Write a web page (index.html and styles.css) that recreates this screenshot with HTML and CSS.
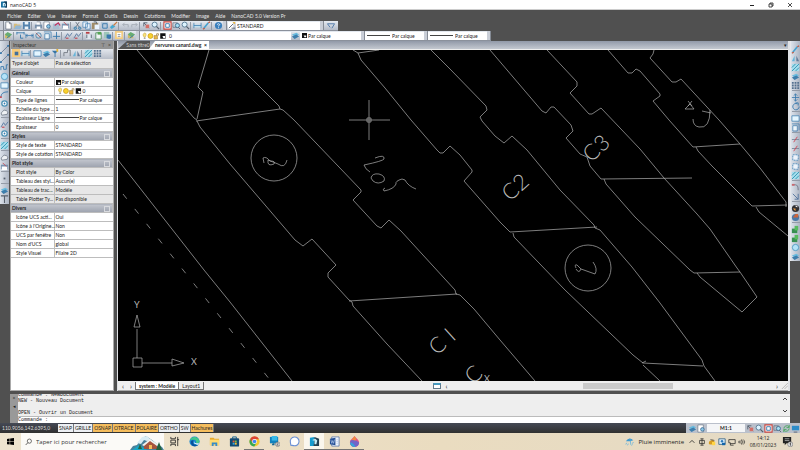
FILE: index.html
```html
<!DOCTYPE html>
<html lang="fr">
<head>
<meta charset="utf-8">
<title>nanoCAD 5</title>
<link rel="stylesheet" href="styles.css">
</head>
<body>
<header class="title">
  <svg class="logo" viewBox="0 0 10 10"><rect width="10" height="10" rx="1" fill="#17709f"/><path d="M5 0h5v10H7z" fill="#113c58"/><path d="M3 8V3l3-1 2 2v4H6V4H5v4z" fill="#d7f3ff"/></svg>
  <span>nanoCAD 5</span>
  <div class="window-buttons">
    <button aria-label="Réduire"><svg viewBox="0 0 6 6"><path d="M1 3.5h4" stroke="#222"/></svg></button>
    <button aria-label="Restaurer"><svg viewBox="0 0 6 6"><path d="M1 2h3v3H1zM2 2V1h3v3H4" fill="none" stroke="#222" stroke-width=".8"/></svg></button>
    <button aria-label="Fermer"><svg viewBox="0 0 6 6"><path d="M1 1l4 4M5 1L1 5" stroke="#222" stroke-width=".8"/></svg></button>
  </div>
</header>
<nav class="menu">
  <a href="#">Fichier</a><a href="#">Editer</a><a href="#">Vue</a><a href="#">Insérer</a><a href="#">Format</a><a href="#">Outils</a><a href="#">Dessin</a><a href="#">Cotations</a><a href="#">Modifier</a><a href="#">Image</a><a href="#">Aide</a><a href="#">NanoCAD 5.0 Version Pr</a>
</nav>
<div class="bars">
  <div class="bar">
    <i class="grip"></i>
    <div class="tools" data-icons="new open save | print preview export plot | cut copy paste clip brush | undo redo | pan zoom | frame zoomwin zoom | ruler pencil | help"></div>
    <i class="grip"></i>
    <div class="tools" data-icons="style"></div>
    <select class="style-select" aria-label="Style de texte"><option>STANDARD</option></select>
    <i class="grip"></i>
    <button class="wide" aria-label="Style de cotation"><svg viewBox="0 0 14 9"><path d="M3 2h8L8 7M3 2l3 4" fill="none" stroke="#4773a5"/></svg></button>
  </div>
  <div class="bar">
    <i class="grip"></i>
    <div class="tools" data-icons="layers | dimh dim diam dimbox axis | edit edit | redbox greenbox shield | props | layers"></div>
    <i class="grip"></i>
    <label class="combo layer"><svg viewBox="0 0 30 9"><use href="#layer-state"/></svg><select aria-label="Calque courant"><option>0</option></select></label>
    <div class="tools" data-icons="stack"></div>
    <label class="combo color"><svg viewBox="0 0 6 6"><use href="#swatch"/></svg><select aria-label="Couleur"><option>Par calque</option></select></label>
    <i class="grip"></i>
    <label class="combo line"><i class="sample"></i><select aria-label="Type de ligne"><option>Par calque</option></select></label>
    <i class="grip"></i>
    <label class="combo line"><i class="sample"></i><select aria-label="Épaisseur"><option>Par calque</option></select></label>
    <i class="grip"></i>
  </div>
</div>
<main>
  <div class="rail"><div class="tools" data-icons="line line spline circle rect arc donut cloud | edit donut | hatch | cloud plot | point | stack text"></div></div>
  <aside class="inspector">
    <div class="panel-title"><span>Inspecteur</span><button aria-label="Épingler">⊤</button><button aria-label="Fermer">×</button></div>
    <div class="panel-tools"><div class="tools" data-icons="selected ruler | rect stack filter | pin mirror | hatch grid"></div></div>
    <table>
      <tbody>
        <tr class="off"><th class="flush">Type d'objet</th><td>Pas de sélection</td></tr>
        <tr class="group"><th colspan="2"><span>Général</span></th></tr>
        <tr><th>Couleur</th><td><svg class="sw" viewBox="0 0 6 6"><use href="#swatch"/></svg>Par calque</td></tr>
        <tr><th>Calque</th><td><svg class="state" viewBox="0 0 30 9"><use href="#layer-state"/></svg>0</td></tr>
        <tr><th>Type de lignes</th><td><i class="sample"></i>Par calque</td></tr>
        <tr><th>Echelle du type ...</th><td>1</td></tr>
        <tr><th>Epaisseur Ligne</th><td><i class="sample"></i>Par calque</td></tr>
        <tr><th>Epaisseur</th><td>0</td></tr>
        <tr class="group"><th colspan="2"><span>Styles</span></th></tr>
        <tr><th>Style de texte</th><td>STANDARD</td></tr>
        <tr><th>Style de cotation</th><td>STANDARD</td></tr>
        <tr class="group"><th colspan="2"><span>Plot style</span></th></tr>
        <tr class="off"><th>Plot style</th><td>By Color</td></tr>
        <tr><th>Tableau des styl...</th><td>Aucun(e)</td></tr>
        <tr class="off"><th>Tableau de trac...</th><td>Modèle</td></tr>
        <tr class="off"><th>Table Plotter Ty...</th><td>Pas disponible</td></tr>
        <tr class="group"><th colspan="2"><span>Divers</span></th></tr>
        <tr><th>Icône UCS acti...</th><td>Oui</td></tr>
        <tr><th>Icône à l'Origine...</th><td>Non</td></tr>
        <tr><th>UCS par fenêtre</th><td>Non</td></tr>
        <tr><th>Nom d'UCS</th><td>global</td></tr>
        <tr><th>Style Visuel</th><td>Filaire 2D</td></tr>
      </tbody>
    </table>
  </aside>
  <section class="document">
    <div class="doc-tabs"><button class="back">Sans titre0</button><button class="front">nervures canard.dwg <b>×</b></button><span class="drop">▾</span></div>
    <svg class="canvas" viewBox="118 50 670 331" preserveAspectRatio="xMidYMid slice">
      <g class="ink">
        <path d="M137 50L194 118L197 120M209 50L198 87L203 92L197 119M196 121L280 109M225 52L221 48M225 52L279 106L280 109L283 110L294 120L361 190L361 192L353 200L377 226L381 228L389 220L401 231L455 290L456 294L460 295L474 309L500 340L535 381"/>
        <path d="M197 121L200 127L230 164L295 240L303 246L312 239L336 265L328 273L328 277L349 300L352 302L353 306L387 344L422 381M349 301L457 294"/>
        <path d="M118 160L204 270L230 302L292 381"/>
        <path d="M123 194L270 380" stroke-dasharray="6 13"/>
        <path d="M353 50L358 53L379 50M358 53L361 60L385 88L411 120L437 150L440 153L443 153L450 146L460 155L472 170L472 172L464 181L500 222L510 232L597 227M513 233L514 237L565 290L633 355L643 363L703 366M642 363L646 361M643 365L660 381"/>
        <path d="M431 50L450 69L486 106L487 110L480 117L482 121L495 136L504 143L512 136L527 150L560 190L594 225L595 228L600 230L632 267L660 303L702 360L704 366L715 381"/>
        <path d="M490 50L542 111L546 113L551 107L554 107L571 125L573 131L566 138L580 154L587 157L590 166L601 179L692 178M604 179L606 184L635 217L690 270L694 273L740 272M697 273L700 277L742 312L757 297L740 272L737 268L710 229L697 214L664 178L640 149L601 108L592 114L589 114L570 93L577 86L577 82L547 50"/>
        <path d="M608 50L628 73L632 73L636 69L640 71L660 94L660 96L653 101L669 120L693 147L740 144M696 147L698 151L712 166L752 206L787 205M756 207L759 212L788 236M654 50L653 54L650 58L672 82L676 82L681 79L719 120L740 144L760 168L786 202V207"/>
        <circle cx="274" cy="158" r="23"/><circle cx="588" cy="268" r="23"/>
        <path d="M264 163L263 158Q266 156 270 161Q276 161 274 164Q267 167 268 160L278 164Q285 169 287 160M375 158Q385 154 384 159Q383 161 364 165Q365 169 370 172M371 178Q372 173 379 174Q386 176 384 181Q378 185 373 181ZM385 188Q382 189 384 191Q394 189 396 184Q395 181 402 179L405 180Q408 186 416 189"/>
        <path d="M576 268Q574 264 577 265L581 269Q579 274 576 269M581 269L595 274Q598 269 593 262M688 101L692 106M692 101L688 106M685 109L690 104L694 109ZM702 111L711 113M710 110Q710 129 699 127Q693 126 693 119"/>
        <path d="M137 358V329M134 327L137 315L140 327ZM142 363H172M172 359L184 363L172 366ZM133 358H142V367H133Z"/>
        <path d="M369 100V140M349 120H390M367 118H371V122H367Z"/>
      </g>
      <g class="plot-text">
        <text transform="translate(510 202) rotate(-42)">C2</text>
        <text transform="translate(437 356) rotate(-42)">C</text>
        <text transform="translate(453 342) rotate(-42)">I</text>
        <text transform="translate(591 163) rotate(-42)">C3</text>
        <text transform="translate(473 385) rotate(-42)">C</text>
        <text class="axis" x="134" y="308">Y</text>
        <text class="axis" x="191" y="365">X</text>
        <text class="axis" x="484" y="382">X</text>
      </g>
    </svg>
    <div class="layout-tabs">
      <span class="arrows">‹</span><span class="arrows">›</span><button class="layout current">system : Modèle</button><button class="layout">Layout1</button>
      <div class="scroll">
        <i class="split"></i><span class="arrows">‹</span><div class="track"><i class="thumb"></i></div><span class="arrows">›</span>
        <svg class="corner" viewBox="0 0 8 8"><path d="M1 8L8 1M4 8l4-4" stroke="#999" stroke-width=".7"/></svg>
      </div>
    </div>
  </section>
  <div class="rail right"><div class="tools" data-icons="pencil mirror hatch stack grid | move rotate | rect dimbox | trim trim frame2 frame2 hatch | corner chamfer | ball ball2 | green green circle stack"></div></div>
</main>
<section class="console">
  <div class="console-side"><span>×</span><span>◂</span></div>
  <div class="console-body">
    <div class="log"><pre>Commande : NewDocument
NEW - Nouveau Document

OPEN - Ouvrir un Document</pre><div class="updown"><svg viewBox="0 0 6 6"><path d="M1 4l2-2 2 2" fill="none" stroke="#444"/></svg><svg viewBox="0 0 6 6"><path d="M1 2l2 2 2-2" fill="none" stroke="#444"/></svg></div></div>
    <label class="prompt">Commande :<input type="text" aria-label="Commande"></label>
  </div>
</section>
<div class="status">
  <span class="coords">110.9056,142.6395,0</span>
  <div class="modes"><button>SNAP</button><button>GRILLE</button><button class="on">OSNAP</button><button class="on">OTRACE</button><button class="on">POLAIRE</button><button>ORTHO</button><button>SW</button><button class="on">Hachures</button></div>
  <div class="view-tools"><div class="tools" data-icons="stack preview"></div><button class="scale">M1:1</button><div class="tools" data-icons="pan zoom frame zoomwin refresh screen"></div></div>
</div>
<footer class="taskbar">
  <button class="start" aria-label="Démarrer"><svg viewBox="0 0 8 8"><path d="M0 1l3-.4v3.1H0zM3.6.5L8 0v3.7H3.6zM0 4.3h3v3.1L0 7zM3.6 4.3H8V8l-4.4-.5z"/></svg></button>
  <label class="search">
    <svg class="lens" viewBox="0 0 8 8"><circle cx="5" cy="3" r="2.4" fill="none" stroke="#222" stroke-width=".7"/><path d="M3.3 4.8L.8 7.4" stroke="#222" stroke-width=".8"/></svg>
    <input type="text" placeholder="Taper ici pour rechercher">
    <svg class="scene" viewBox="0 0 34 15"><path d="M0 15l3-4 4-1 4-6 5-3 6 4 5 4 5 3 2 3z" fill="#48819b"/><path d="M7 8l5-6 5-1 4 4-4 1-3-1-3 4z" fill="#d9edf5"/><path d="M2 15l7-5 8 5z" fill="#18a5c6"/><path d="M14 14V9l6-4 7 5v4z" fill="#a7553d"/><path d="M12 10l8-6 9 6-2 1-7-5-6 5z" fill="#f1f3ef"/><path d="M19 10h3v4h-3z" fill="#f4bd58"/><path d="M26 15l3-8 3 8zM8 14l2-5 2 5z" fill="#24633f"/></svg>
  </label>
  <div class="apps">
    <button aria-label="Vue des tâches"><svg viewBox="0 0 12 12"><path d="M2 1v2h5V1M2 11V9h5v2M2 4.500h5v3H2zM9.500 1v10M9 4h2" fill="none" stroke="#222" stroke-width=".9"/></svg></button>
    <button aria-label="Edge"><svg viewBox="0 0 12 12"><circle cx="6" cy="6" r="5.500" fill="#1685cf"/><path d="M1 5c1-6 10-5 10.500 1 0 2-3 2.500-4 1 1-2-1-3-2.500-3S2 4 1 5z" fill="#44c88a"/><path d="M5 5c-2 3 1 6 5 5-4 3-8 0-8-3 0-2 2-3 3-2z" fill="#0a4f9a"/><path d="M6 5c-1 2 0 3 2 3h3l-1 1.500C7 10 4 8 6 5z" fill="#e8f5fa"/></svg></button>
    <button aria-label="Explorateur"><svg viewBox="0 0 12 12"><path d="M1 2h4l1 1h5v7H1z" fill="#e7aa2c"/><path d="M1 4h10v6H1z" fill="#ffdb73"/><path d="M3 7h6v4H7V9H5v2H3z" fill="#368cc8"/></svg></button>
    <button aria-label="Store"><svg viewBox="0 0 12 12"><path d="M4 3V1h4v2" fill="none" stroke="#0b5e8e"/><rect x="1" y="2.500" width="10" height="9" rx="1" fill="#134b73"/><path d="M4 5h2v2H4z" fill="#ee5b37"/><path d="M6.400 5h2v2h-2z" fill="#80bd44"/><path d="M4 7.400h2v2H4z" fill="#36a9e0"/><path d="M6.400 7.400h2v2h-2z" fill="#f9bf2f"/></svg></button>
    <button class="run" aria-label="Chrome"><svg viewBox="0 0 12 12"><circle cx="6" cy="6" r="5.500" fill="#f4c832"/><path d="M1.200 3.300A5.500 5.500 0 0 1 11 3.500H6L4 8z" fill="#dc4436"/><path d="M1.200 3.300A5.500 5.500 0 0 0 5.700 11.500L8 7.500 4 8z" fill="#37a853"/><circle cx="6" cy="6" r="2.600" fill="#fff"/><circle cx="6" cy="6" r="2" fill="#4285f4"/></svg></button>
    <button aria-label="Bureau à distance"><svg viewBox="0 0 12 12"><path d="M1 1h9v7H1z" fill="#1382be"/><path d="M3 0h6v5H3z" fill="#37bae9"/><path d="M4 8h2v2H3z" fill="#156792"/><circle cx="9.500" cy="9" r="2.500" fill="#ddd" stroke="#555" stroke-width=".5"/><path d="M8.500 8q1-1 1.500 0l-1.500 2h2" fill="none" stroke="#333" stroke-width=".6"/></svg></button>
    <button aria-label="Signal"><svg viewBox="0 0 12 12"><path d="M2 10L1.500 7A4.800 4.800 0 1 1 5 10.500z" fill="#fff" stroke="#6b91d5" stroke-width="1.200"/></svg></button>
    <button class="run active" aria-label="nanoCAD"><svg viewBox="0 0 12 12"><path d="M1 2l5-1v10H1z" fill="#169bce"/><path d="M6 1l5 2v8H5z" fill="#214052"/><path d="M4 4l3-1 2 2-1 4H6V5H4z" fill="#c5edf7"/></svg></button>
    <button class="run" aria-label="Word"><svg viewBox="0 0 12 12"><path d="M3 1h8v10H3z" fill="#eff4fb" stroke="#365d9e" stroke-width=".7"/><path d="M1 3l6-1v8L1 9z" fill="#244f95"/><path d="M2 4l1 4 1-3 1 3 1-4M8 4h2M8 6h2M8 8h2" fill="none" stroke="#b9cef0" stroke-width=".7"/></svg></button>
    <button class="run" aria-label="Paint 3D"><svg viewBox="0 0 12 12"><path d="M6 0c2 3 5 4 5 7a5 5 0 0 1-10 0c0-3 3-4 5-7z" fill="#e05387"/><path d="M1.500 5Q6 3 11 7a5 5 0 0 1-9.500 2z" fill="#7164c9"/><path d="M1 7q4 0 6 5-5 0-6-5z" fill="#34a5dc"/><path d="M6 0L3 4l4 1 1-2z" fill="#f28b43"/></svg></button>
  </div>
  <div class="tray">
    <svg class="weather" viewBox="0 0 12 12"><path d="M1 5q4-6 9-1L6 5z" fill="#3f9ad0"/><path d="M6 2l1 7q1 2 2 0M2 7L1 9M4 8l-1 2M10 6l-1 2" fill="none" stroke="#57aede" stroke-width=".9"/></svg>
    <span class="rain">Pluie imminente</span>
    <svg viewBox="0 0 10 10"><path d="M2 6l3-3 3 3" fill="none" stroke="#222"/></svg>
    <svg viewBox="0 0 10 10"><path d="M2 3h6v4H2zM3 1h4M3 9h4M5 1v8" fill="none" stroke="#222" stroke-width=".9"/></svg>
    <svg viewBox="0 0 10 10"><path d="M1 7q0-4 3-4 1-2 4 1v4H2z" fill="#d79c20"/><path d="M5 5h4v4H5z" fill="#ffd545"/><path d="M3 2l5 1" stroke="#555"/></svg>
    <svg viewBox="0 0 10 10"><path d="M1 1h8v7H1z" fill="#d8edfa" stroke="#345e80"/><circle cx="5" cy="4" r="1.500" fill="#2c78bb"/><path d="M5 6h4v3H5z" fill="#1265aa"/></svg>
    <svg viewBox="0 0 10 10"><path d="M1 2h8v5H3M3 9h4M1 2v4h2v3" fill="none" stroke="#222" stroke-width=".9"/></svg>
    <svg viewBox="0 0 10 10"><path d="M1 4h2l2-2v6L3 6H1zM6 4q1 1 0 2M7 2q3 3 0 6" fill="none" stroke="#222" stroke-width=".8"/></svg>
    <div class="clock"><span>14:12</span><span>08/01/2023</span></div>
    <svg class="note" viewBox="0 0 12 12"><path d="M1 1h9v7H5L3 10V8H1z" fill="#222"/><path d="M3 3h5M3 5h5" stroke="#ddd" stroke-width=".7"/><circle cx="9" cy="9" r="2.800" fill="#ddd" stroke="#555" stroke-width=".5"/><path d="M8.500 8l.7-.5v3" fill="none" stroke="#111" stroke-width=".7"/></svg>
  </div>
</footer>
<svg class="defs" aria-hidden="true">
  <symbol id="swatch" viewBox="0 0 6 6"><path d="M0 0h6v6H0z" fill="#111"/><path d="M2 3h3v2H3z" fill="#fff"/></symbol>
  <symbol id="layer-state" viewBox="0 0 30 9"><path d="M4 1q3 0 2 3L5 6H4Q1 3 4 1" fill="#fae27a" stroke="#b79c45" stroke-width=".5"/><path d="M3.500 7h2" stroke="#777"/><circle cx="11" cy="4.500" r="2.800" fill="#f8d12e" stroke="#c99b13" stroke-width=".8"/><path d="M15 4h4v4h-4z" fill="#e7b64d" stroke="#94722d" stroke-width=".5"/><path d="M18 4V2h2v2" fill="none" stroke="#94722d" stroke-width=".8"/><path d="M22 1.500h6v6h-6z" fill="#111"/><path d="M24.500 4.500h3V7h-2z" fill="#fff"/></symbol>
</svg>
<script src="app.js"></script>
</body>
</html>
```
FILE: styles.css
```css
* { box-sizing: border-box; }
body {
  margin: 0; min-height: 100vh; display: flex; flex-direction: column;
  background: #505050; color: #222; overflow-x: hidden;
  font: 5px/8px Lato, "Liberation Sans", sans-serif;
}
button, select, input { font: inherit; color: inherit; border: 0; padding: 0; margin: 0; background: none; border-radius: 0; }
select { appearance: none; min-width: 0; }
input { min-width: 0; outline: 0; }
svg { display: block; flex: none; }
.defs { display: none; }

.title { display: flex; align-items: center; gap: 3px; height: 10px; padding: 0 7px 0 1px; background: #fff; border-bottom: 1px solid #ccc; font-family: "Open Sans", sans-serif; }
.logo { width: 6px; height: 7px; }
.window-buttons { margin-left: auto; display: flex; gap: 13px; }
.window-buttons button, .window-buttons svg { display: block; width: 6px; height: 6px; }

.menu { display: flex; gap: 6px; height: 11px; padding: 0 7px; align-items: center; color: #e8e8e8; }
.menu a { color: inherit; text-decoration: none; white-space: nowrap; }

.bar { display: flex; align-items: center; width: max-content; height: 10px; background: linear-gradient(#e6ebf1, #b3bac7); border-bottom: 1px solid #8b919c; }
.grip { flex: none; width: 4px; height: 9px; border-right: 1px solid #858b95; background: #c9ced7; }
.tools { display: flex; flex: none; align-items: center; }
.tools button, .tools svg { display: block; width: 9px; height: 9px; }
.tools i { width: 3px; height: 8px; border-left: 1px solid #949ba7; }
.wide, .wide svg { width: 14px; height: 8px; }
.style-select { width: 84px; height: 8px; background: #fff; padding-left: 1px; }
.combo { display: flex; align-items: center; height: 8px; background: #fff; gap: 1px; }
.combo select { flex: 1; height: 8px; line-height: 8px; }
.combo.layer { width: 151px; }
.combo.layer svg { width: 28px; height: 8px; }
.combo.color { width: 61px; padding-left: 2px; }
.combo.color svg { width: 5px; height: 5px; }
.combo.line { width: 59px; padding-left: 2px; }
.sample { display: inline-block; flex: none; width: 23px; height: 1px; background: #444; margin-right: 1px; vertical-align: 2px; }

main { flex: 1; display: flex; min-height: 0; }
.rail { flex: none; width: 10px; padding-right: 1px; }
.rail .tools { flex-direction: column; padding-top: 4px; background: linear-gradient(90deg, #dce2ea, #adb5c3); }
.rail .tools i { width: 8px; height: 3px; border: 0; border-top: 1px solid #949ba7; }
.rail.right { padding: 0; }
.rail.right .tools { border-left: 1px solid #e6e8ec; }

.inspector { flex: none; width: 104px; background: #fff; border: solid #aaa; border-width: 0 1px 1px; margin-right: 3px; }
.panel-title { display: flex; gap: 3px; align-items: center; height: 8px; padding: 0 2px; background: #949494; color: #333; }
.panel-title span { flex: 1; }
.panel-tools { height: 10px; background: linear-gradient(#e3e7ed, #b8bec9); padding-left: 1px; }
.inspector table { width: 100%; border-collapse: collapse; table-layout: fixed; }
.inspector th, .inspector td { height: 9px; padding: 0 0 0 1px; border-bottom: 1px solid #bdbdbd; font-weight: 400; text-align: left; white-space: nowrap; line-height: 8px; }
.inspector th { width: 43px; padding-left: 5px; border-right: 1px solid #bdbdbd; }
.inspector th.flush { padding-left: 1px; }
.inspector .off > * { background: #e7e7e7; }
.inspector .group th { padding: 0 2px 0 1px; background: linear-gradient(#c2c6ce, #9ca2ae); font-weight: 700; }
.group th::after { content: ""; float: right; width: 4px; height: 4px; margin-top: 2px; border: 1px solid #d8dade; }
.sw, .state { display: inline-block; vertical-align: middle; }
.sw { width: 5px; height: 5px; margin-right: 1px; }
.state { width: 27px; height: 8px; }

.document { flex: 1; min-width: 0; display: flex; flex-direction: column; border: solid #dfe1e5; border-width: 0 2px 0 1px; }
.doc-tabs { flex: none; display: flex; align-items: flex-end; height: 9px; background: linear-gradient(#9199a8, #c3c8d0); border-bottom: 1px solid #eee; }
.doc-tabs button { height: 8px; white-space: nowrap; }
.back { width: 32px; padding-left: 8px; background: #555; color: #ccc; clip-path: polygon(0 100%, 9px 0, 100% 0, 100% 100%); }
.doc-tabs .front { display: flex; justify-content: space-between; width: 60px; margin-left: -1px; padding: 0 2px 0 6px; background: #fff; font-weight: 700; clip-path: polygon(0 100%, 6px 0, 100% 0, 100% 100%); }
.drop { margin-left: auto; margin-right: 1px; }
.canvas { flex: 1; width: 100%; min-height: 0; height: 0; background: #000; }
.ink { fill: none; stroke: #b2b2b2; stroke-width: .7; }
.plot-text { fill: #b8b8b8; font: 300 22px Lato, sans-serif; }
.plot-text .axis { font-size: 9px; font-weight: 400; }
.layout-tabs { flex: none; display: flex; align-items: center; height: 10px; padding-left: 1px; background: #efefef; border-bottom: 1px solid #aaa; }
.arrows { width: 8px; text-align: center; font-size: 7px; }
.layout { height: 8px; padding: 0 3px; border: solid #777; border-width: 0 1px 1px 0; white-space: nowrap; }
.layout.current { font-weight: 700; background: #fff; border-left-width: 1px; }
.scroll { flex: none; display: flex; align-items: center; width: 53%; margin-left: auto; }
.split { width: 8px; height: 6px; border: 1px solid #63798a; border-top: 2px solid #469bc0; background: #fff; margin-right: 1px; }
.track { flex: 1; height: 7px; display: flex; align-items: center; }
.thumb { width: 28%; height: 6px; margin-left: 41%; background: #cbcbcb; }
.corner { width: 7px; height: 7px; }

.console { flex: none; display: flex; margin: 3px 10px 0; height: 29px; background: #eee; }
.console-side { flex: none; width: 8px; background: #999; display: flex; flex-direction: column; align-items: center; }
.console-body { flex: 1; min-width: 0; display: flex; flex-direction: column; font: 5px/6px "Liberation Mono", monospace; }
.log { flex: 1; min-height: 0; overflow: hidden; display: flex; align-items: flex-end; border-bottom: 1px solid #bbb; }
.log pre { margin: 0; flex: 1; font: inherit; }
.updown { display: flex; flex-direction: column; justify-content: space-between; width: 8px; height: 20px; padding-bottom: 2px; }
.updown svg { width: 6px; height: 6px; }
.prompt { display: flex; height: 6px; background: #fff; }
.prompt input { flex: 1; }

.status { flex: none; display: flex; align-items: center; height: 10px; background: linear-gradient(#454955, #303030); color: #ddd; }
.coords { width: 58px; padding-left: 2px; white-space: nowrap; }
.modes { display: flex; color: #222; }
.modes button { height: 8px; padding: 0 1px; line-height: 8px; background: #eceff3; border-right: 1px solid #77797e; }
.modes .on { background: #f5bd5d; }
.view-tools { margin-left: auto; display: flex; align-items: center; height: 10px; background: #bac0cb; color: #222; padding-left: 2px; }
.scale { width: 38px; height: 8px; background: #f4f5f7; font-weight: 700; margin: 0 1px; }

.taskbar { flex: none; display: flex; align-items: center; height: 17px; background: linear-gradient(90deg, #eee4cf, #eadcc0 55%, #e4dac5); font-family: "Open Sans", sans-serif; }
.start { width: 21px; }
.start svg { width: 7px; height: 7px; margin: auto; }
.search { flex: none; display: flex; align-items: center; width: 143px; height: 17px; padding-left: 4px; background: #fbfaf7; gap: 4px; }
.lens { width: 7px; height: 8px; }
.search input { flex: 1; font-size: 6px; color: #222; }
.search input::placeholder { color: #333; opacity: 1; }
.scene { width: 34px; height: 15px; align-self: flex-end; }
.apps { display: flex; height: 17px; }
.apps button { flex: none; width: 20px; height: 17px; border-bottom: 1px solid transparent; }
.apps svg { width: 11px; height: 11px; margin: auto; }
.apps .run { border-bottom-color: #747474; }
.apps .active { background: #faf6ed; }
.tray { display: flex; align-items: center; margin-left: auto; padding-right: 7px; }
.tray svg { width: 8px; height: 8px; margin-right: 2px; }
.tray svg.weather { width: 10px; height: 10px; margin-right: 3px; }
.rain { font-size: 6px; margin-right: 4px; white-space: nowrap; }
.clock { display: flex; flex-direction: column; align-items: center; width: 30px; margin-right: 4px; line-height: 7px; }
.tray svg.note { width: 11px; height: 11px; margin: 0; }
```
FILE: app.js
```js
const B = '#3979ad', D = '#56616f';
const stroke = (d, c = B, w = 1) => `<path d="${d}" fill="none" stroke="${c}" stroke-width="${w}"/>`;
const fill = (d, c) => `<path d="${d}" fill="${c}"/>`;
const icons = {
  new: fill('M2 1h4l2 2v6H2z', '#fff') + stroke('M2 1h4l2 2v6H2zM6 1v2h2', D, .7),
  open: fill('M1 3h3l1 1h3v5H1z', '#d8bd7a') + fill('M1 9l2-4h7L8 9z', '#93b7d4'),
  save: fill('M1 1h8v8H1z', '#5382ad') + fill('M3 1h4v3H3zM3 6h4v3H3z', '#eef5fb'),
  print: fill('M1 4h8v4H1z', '#7890aa') + fill('M3 1h4v3H3zM3 6h4v3H3z', '#fff') + stroke('M3 1h4v3', D, .6),
  preview: fill('M1 1h6v8H1z', '#fff') + stroke('M1 1h6v8H1z', D, .6) + '<circle cx="6" cy="6" r="2" fill="#8cc8e8" stroke="#315f89" stroke-width=".8"/>',
  export: fill('M1 3h7v6H1z', '#a8bdd1') + stroke('M3 5l4-3 2 3', '#c02f60', 1.4),
  plot: fill('M1 3h8v5H1z', '#7894b1') + fill('M2 5h6v4H2z', '#fff') + stroke('M3 1l4 4', '#c44f5b', 1),
  cut: stroke('M3 1l4 6M7 1L3 7', D, .8) + '<circle cx="2.500" cy="8" r="1.300" fill="none" stroke="#2778ac"/><circle cx="7.500" cy="8" r="1.300" fill="none" stroke="#2778ac"/>',
  copy: fill('M1 1h5v6H1zM4 3h5v6H4z', '#e8f1fa') + stroke('M1 1h5v6H1zM4 3h5v6H4z', B, .7),
  paste: fill('M1 2h7v7H1z', '#a08c69') + fill('M4 4h5v5H4z', '#eaf4ff') + stroke('M3 1h3v2', D),
  clip: fill('M1 1h8v8H1z', '#b8c9db') + stroke('M3 3h5v5H3z', B),
  brush: fill('M1 7l3-3 3 2-4 3z', '#45a9d2') + stroke('M5 5l4-4', '#c77b42', 1.4),
  undo: stroke('M8 7V4H2l2-2M2 4l2 2', '#a4abb5'),
  redo: stroke('M2 7V4h6L6 2M8 4L6 6', '#a4abb5'),
  pan: stroke('M2 2l6 6M2 6V2h4', D) + fill('M4 4h4v4H4z', '#d36f68'),
  zoom: '<circle cx="4" cy="4" r="2.800" fill="#def4ff" stroke="#567892"/>' + stroke('M6 6l3 3', D, 1.4),
  zoomwin: stroke('M1 2h5v5H1z', D, .7) + '<circle cx="6" cy="5" r="2.300" fill="#a8dff1" stroke="#426f94"/>' + stroke('M7 7l2 2', D),
  frame: fill('M1 1h8v8H1z', '#fff') + stroke('M1 1h8v8H1z', '#c8453e', 1.2) + stroke('M3 3h4v4H3z', B),
  ruler: fill('M0 4h10v3H0z', '#bfdfef') + stroke('M1 2v6M9 2v6M1 5h8', B, .8),
  pencil: stroke('M2 8l5-6', '#45a1cf', 1.8) + stroke('M7 2l2-1M1 9l2-1', '#bf5942', 1.4),
  help: '<circle cx="5" cy="5" r="4" fill="#397fbd"/>' + stroke('M3.500 4q1-2 3 0L5 5.500V6M5 7v1', '#fff', .9),
  style: fill('M1 1h6v8H1z', '#fff') + stroke('M2 8l5-5M5 8h4', D) + fill('M6 1h3v3z', '#e9b945'),
  layers: fill('M1 3h6v5H1z', '#cfb969') + fill('M4 1l5 3-4 3-4-3z', '#67ad72') + stroke('M3 8l4-3', B),
  dimh: stroke('M1 2h8M1 1v3M9 1v3M5 4v4h3', B),
  dim: stroke('M1 3v5M9 3v5M1 5h8M3 4L1 5l2 1M7 4l2 1-2 1', B, .8),
  diam: '<circle cx="5" cy="5" r="3" fill="none" stroke="#4c8ab2"/>' + stroke('M2 2l6 6', '#a45555', .8),
  dimbox: fill('M2 3h5v5H2z', '#edf5fa') + stroke('M2 3h5v6H2zM1 1h8M9 1v7', B, .8),
  axis: stroke('M1 6h8M5 1v8', B, 1),
  edit: stroke('M1 8l3-5 2 3 3-4', '#5a7ba2') + stroke('M2 8h3', '#c5424c', 1.2),
  redbox: fill('M1 4h7v5H1z', '#e0e8ef') + stroke('M2 8V4M7 8V4', D) + fill('M1 1h4v2H1z', '#b83e43'),
  greenbox: fill('M2 2h6v7H2z', '#eef3f3') + stroke('M2 2h6v7H2z', '#579064') + fill('M4 1h4v3H4z', '#53a553'),
  shield: fill('M1 1h6v7H1z', '#9ec6b9') + fill('M4 4h5v4L7 9 4 8z', '#3778ad'),
  props: fill('M0 0h9v9H0z', '#f1cc83') + fill('M2 2h5v5H2z', '#fff') + stroke('M3 4h3M3 6h3', D, .7),
  stack: fill('M1 4l5-2 3 2-5 2z', '#69bbdf') + fill('M1 6l5-2 3 2-5 3z', '#3d7eac'),
  line: stroke('M1 9l8-8', '#667790', .9) + fill('M0 8h2v2H0zM8 0h2v2H8z', B),
  spline: stroke('M1 8V4h3v3h3V2h2', B),
  circle: '<circle cx="5" cy="5" r="3.500" fill="#b5e3f8" stroke="#398bb6" stroke-width=".8"/>',
  rect: fill('M1 2h8v6H1z', '#e5f6ff') + stroke('M1 2h8v6H1z', B, .8),
  arc: stroke('M1 8q0-6 8-6', B) + fill('M0 7h2v2H0z', '#c75057'),
  donut: '<circle cx="5" cy="5" r="3" fill="#fff" stroke="#4b91b5" stroke-width="1.400"/><circle cx="5" cy="5" r="1" fill="#3979ad"/>',
  cloud: fill('M2 8q-2-3 1-4 1-3 4-1 3 1 1 4z', '#eef1f4') + stroke('M2 8q-2-3 1-4 1-3 4-1 3 1 1 4z', D, .7),
  hatch: fill('M1 1h8v8H1z', '#a4deed') + stroke('M1 5l4-4M1 9l8-8M5 9l4-4', '#258aa7', .9),
  point: fill('M4 4h2v2H4z', D),
  text: stroke('M1 1h8M5 1v8', '#59616d', 1.2),
  selected: fill('M0 0h9v9H0z', '#f7cb7c') + fill('M3 3h4v4H3z', '#426f9b'),
  filter: fill('M1 2h7L5 5v4H4V5z', '#3876a8') + fill('M6 0h2v3H6z', '#e9b431'),
  pin: stroke('M1 8V4h4V1h3v7', '#737982'),
  mirror: fill('M1 8l3-6v6z', '#64b5da') + fill('M6 2l3 6H6z', '#647c99'),
  grid: fill('M1 1h2v2H1zM4 1h2v2H4zM7 1h2v2H7zM1 4h2v2H1zM4 4h2v2H4zM7 4h2v2H7zM1 7h2v2H1zM4 7h2v2H4zM7 7h2v2H7z', '#54708e'),
  move: stroke('M5 1v8M1 5h8M3 3l2-2 2 2M3 7l2 2 2-2', B, .9),
  rotate: stroke('M7 2a3.500 3.500 0 1 0 2 3M5 1h3v3', B),
  trim: stroke('M1 5h8', '#7a8798') + stroke('M3 8l4-6', '#cf4555'),
  frame2: '<path d="M2 2h6v6H2z" fill="#edf3fa" stroke="#4b8abb" stroke-dasharray="2 1"/>',
  corner: stroke('M1 2h4q3 0 3 6', '#6f7484') + fill('M1 1h3v2H1z', '#ca6970'),
  chamfer: stroke('M2 2l6 6M8 2v6H4', '#51749d'),
  ball: '<circle cx="5" cy="5" r="4" fill="#303033"/>' + fill('M2 5h3v3z', '#eb9b44') + fill('M4 2h3v2z', '#fff'),
  ball2: '<circle cx="5" cy="5" r="4" fill="#4a79a8"/>' + fill('M5 1h3v4H2z', '#ca653d'),
  green: fill('M1 4h6v5H1z', '#388f52') + fill('M4 1h4v5H4z', '#58bc60'),
  refresh: stroke('M8 3a3.500 3.500 0 0 0-6 2M2 7a3.500 3.500 0 0 0 6-2M8 1v3H5M2 9V6h3', '#3ca353', .9),
  screen: fill('M1 2h8v5H1z', '#2c8cc9') + stroke('M3 9h4', D)
};

document.querySelectorAll('.tools').forEach((bar) => {
  bar.innerHTML = bar.dataset.icons.split(' ').map((name) => name === '|'
    ? '<i></i>'
    : `<button aria-label="${name}"><svg viewBox="0 0 10 10">${icons[name]}</svg></button>`).join('');
});
```
